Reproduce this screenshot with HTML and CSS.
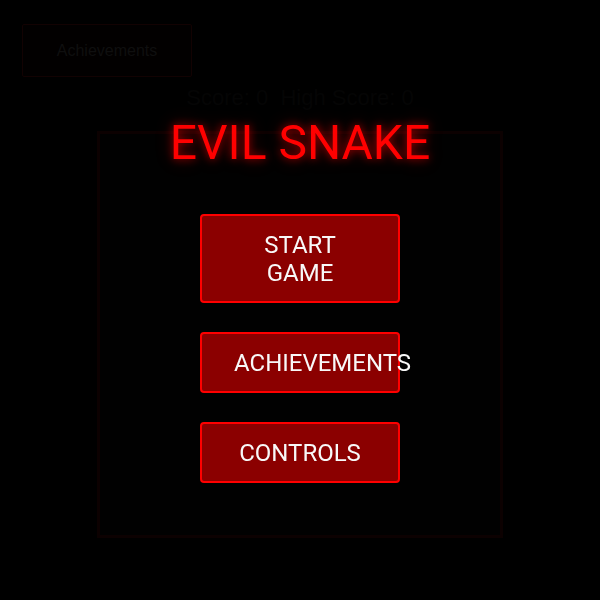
FILE: index.html
```html
<!DOCTYPE html>
<html lang="en">
<head>
<meta charset="utf-8">
<title>Evil Snake</title>
<link rel="stylesheet" href="styles.css">
</head>
<body>
  <div class="game">
    <button class="ach-btn" type="button">Achievements</button>
    <div class="score">Score: 0&nbsp;&nbsp;High Score: 0</div>
    <div class="board"></div>
  </div>

  <div class="menu-overlay">
    <h1 class="title">EVIL SNAKE</h1>
    <div class="menu">
      <button class="menu-btn" type="button">START GAME</button>
      <button class="menu-btn" type="button">ACHIEVEMENTS</button>
      <button class="menu-btn" type="button">CONTROLS</button>
    </div>
  </div>
</body>
</html>
```

FILE: styles.css
```css
html, body {
  margin: 0;
  padding: 0;
  background: #000;
  height: 100%;
}

body {
  font-family: Roboto, "Liberation Sans", Arial, sans-serif;
}

/* game page (sits behind the menu, heavily dimmed) */
.game {
  display: flex;
  flex-direction: column;
  align-items: center;
  padding: 24px 22px 0;
}

.ach-btn {
  align-self: flex-start;
  width: 170px;
  height: 53px;
  background: #020000;
  border: 1px solid #120202;
  border-radius: 2px;
  color: #0f0f0f;
  font-family: "Liberation Sans", Arial, sans-serif;
  font-size: 16px;
  padding: 0;
}

.score {
  margin-top: 8px;
  font-family: "Liberation Sans", Arial, sans-serif;
  font-size: 22px;
  line-height: 26px;
  color: #050505;
}

.board {
  margin-top: 20px;
  width: 400px;
  height: 401px;
  border: 3px solid #0c0101;
  background: #010101;
}

/* start menu overlay */
.menu-overlay {
  position: fixed;
  inset: 0;
  display: flex;
  flex-direction: column;
  align-items: center;
  padding-top: 115px;
  box-sizing: border-box;
}

.title {
  margin: 0 0 43px;
  font-size: 48px;
  font-weight: normal;
  line-height: 56px;
  color: #ff0000;
  text-shadow: 0 0 8px rgba(255, 0, 0, 0.6), 0 0 18px rgba(255, 0, 0, 0.3);
}

.menu {
  display: flex;
  flex-direction: column;
  align-items: center;
  gap: 29px;
}

.menu-btn {
  display: block;
  box-sizing: border-box;
  width: 200px;
  padding: 14.5px 32px;
  background: #8b0000;
  border: 2px solid #ff0000;
  border-radius: 4px;
  color: #f8f8f8;
  font-family: Roboto, "Liberation Sans", Arial, sans-serif;
  font-size: 24px;
  line-height: 28px;
  text-align: center;
  overflow: visible;
}
```
